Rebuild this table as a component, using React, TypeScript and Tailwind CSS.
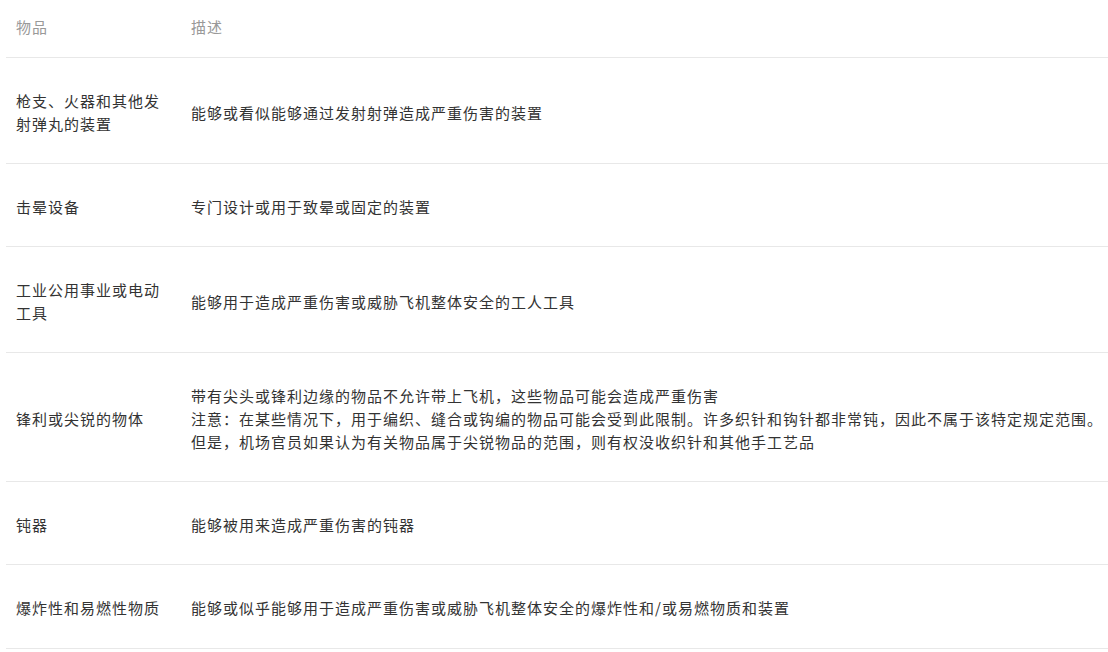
import React from "react";

const rows: { item: string; desc: React.ReactNode }[] = [
  { item: "枪支、火器和其他发射弹丸的装置", desc: "能够或看似能够通过发射射弹造成严重伤害的装置" },
  { item: "击晕设备", desc: "专门设计或用于致晕或固定的装置" },
  { item: "工业公用事业或电动工具", desc: "能够用于造成严重伤害或威胁飞机整体安全的工人工具" },
  {
    item: "锋利或尖锐的物体",
    desc: (
      <>
        带有尖头或锋利边缘的物品不允许带上飞机，这些物品可能会造成严重伤害
        <br />
        注意：在某些情况下，用于编织、缝合或钩编的物品可能会受到此限制。许多织针和钩针都非常钝，因此不属于该特定规定范围。但是，机场官员如果认为有关物品属于尖锐物品的范围，则有权没收织针和其他手工艺品
      </>
    ),
  },
  { item: "钝器", desc: "能够被用来造成严重伤害的钝器" },
  { item: "爆炸性和易燃性物质", desc: "能够或似乎能够用于造成严重伤害或威胁飞机整体安全的爆炸性和/或易燃物质和装置" },
];

export default function App() {
  return (
    <div
      className="w-[1108px] h-[652px] bg-white overflow-hidden pl-[6px]"
      style={{ fontFamily: '"Noto Sans CJK SC", "Noto Sans", sans-serif' }}
    >
      <table className="w-[1102px] border-collapse text-[15px] tracking-[1px] leading-[23px] text-[#333]">
        <thead>
          <tr className="border-b border-[#e8e8e8]">
            <th className="w-[175px] pl-[10px] pr-[16px] pt-[15px] pb-[19px] text-left font-normal text-[#999]">物品</th>
            <th className="pl-[10px] pr-0 pt-[15px] pb-[19px] text-left font-normal text-[#999]">描述</th>
          </tr>
        </thead>
        <tbody>
          {rows.map((r, i) => (
            <tr key={i} className="border-b border-[#e8e8e8]">
              <td className={`w-[175px] pl-[10px] pr-[16px] pt-[31px] align-middle ${i === rows.length - 1 ? "pb-[29px]" : "pb-[28px]"}`}>{r.item}</td>
              <td className={`pl-[10px] pr-0 pt-[31px] align-middle ${i === rows.length - 1 ? "pb-[29px]" : "pb-[28px]"}`}>{r.desc}</td>
            </tr>
          ))}
        </tbody>
      </table>
    </div>
  );
}
